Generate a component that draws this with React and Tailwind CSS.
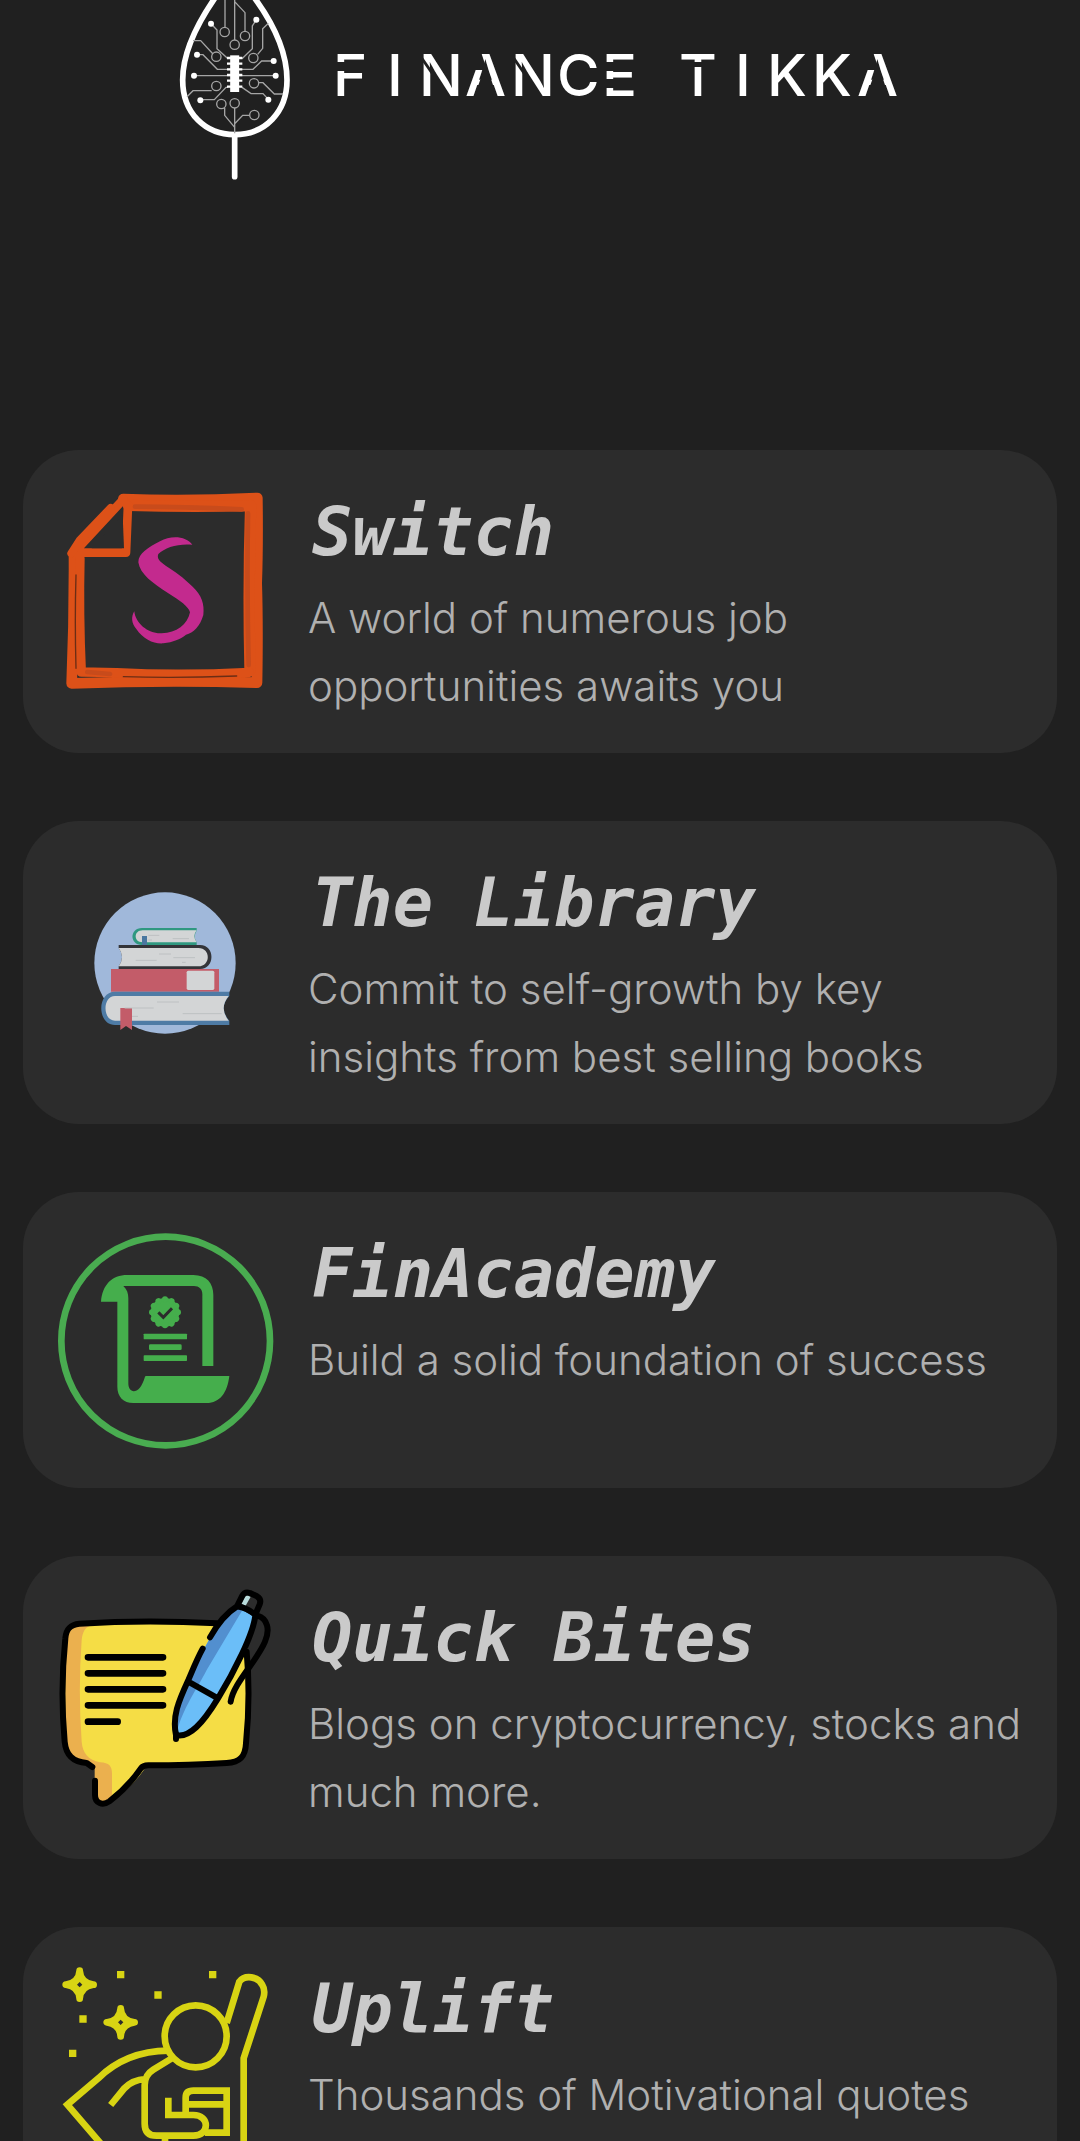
const cards = [
  { title: "Switch", text: "A world of numerous job opportunities awaits you", Icon: SwitchIcon },
  { title: "The Library", text: "Commit to self-growth by key insights from best selling books", Icon: LibraryIcon },
  { title: "FinAcademy", text: "Build a solid foundation of success", Icon: AcademyIcon },
  { title: "Quick Bites", text: "Blogs on cryptocurrency, stocks and much more.", Icon: BitesIcon },
  { title: "Uplift", text: "Thousands of Motivational quotes", Icon: UpliftIcon },
];

const iconClass = "block w-full h-auto overflow-visible";

function LeafLogo() {
  return (
    <svg viewBox="50 0 348 540" className="block h-[180px] w-[116px] shrink-0 overflow-visible" fill="none" stroke="#fff" aria-hidden="true">
      <path d="M170 -15C110 70 67 155 67 240C67 340 135 404 223 404C315 404 380 335 380 240C380 155 340 70 276 -15" strokeWidth="17" />
      <path d="M223 408V530" strokeWidth="17" strokeLinecap="round" />
      <g stroke="#a5a5a5" strokeWidth="4">
        <path d="M194 -5V82M223 -5V120M223 5L254 38V94" />
        <circle cx="193" cy="96" r="14" /><circle cx="223" cy="134" r="14" /><circle cx="254" cy="108" r="14" />
        <path d="M152 71L170 90V146L203 176M288 59L276 78V146L245 176M324 70L307 86V145L292 163M98 122H121L158 162" />
        <circle cx="168" cy="170" r="14" /><circle cx="279" cy="174" r="14" />
        <path d="M110 164H128L171 208H278L304 183H340M101 227H346M203 262H197L162 299H120M245 262L272 281H308L324 298" />
        <circle cx="168" cy="258" r="14" /><circle cx="281" cy="250" r="14" />
        <path d="M154 272H98L80 290M295 248H308L342 282H368" />
        <circle cx="183" cy="312" r="14" /><circle cx="223" cy="310" r="14" /><circle cx="282" cy="345" r="14" />
        <path d="M223 324V400M193 324V346L223 382M223 371L247 346H268" />
      </g>
      <g fill="#fff" stroke="none">
        <circle cx="152" cy="71" r="9" /><circle cx="288" cy="59" r="9" /><circle cx="110" cy="164" r="9" />
        <circle cx="340" cy="183" r="9" /><circle cx="101" cy="227" r="9" /><circle cx="346" cy="227" r="9" />
        <circle cx="120" cy="301" r="9" /><circle cx="324" cy="299" r="9" />
      </g>
      <path d="M223 166V276" strokeWidth="27" />
      <path d="M200 174H246M200 191H246M200 208H246M200 225H246M200 242H246M200 260H246" strokeWidth="7" />
    </svg>
  );
}

function SwitchIcon() {
  return (
    <svg viewBox="-6 33 648 648" className={iconClass} fill="none" aria-hidden="true">
      <g stroke="#dd5118" strokeLinejoin="round" strokeLinecap="round">
        <path d="M190 57Q380 64 592 54Q594 200 590 310Q594 430 591 608Q320 600 35 610Q43 420 42 222" strokeWidth="32" />
        <path d="M205 76Q390 82 572 77Q564 320 570 570" strokeWidth="34" />
        <path d="M568 577Q360 588 170 578L64 576Q56 400 60 235" strokeWidth="28" />
        <path d="M190 58L42 218H198L204 75" strokeWidth="26" />
        <path d="M152 84L60 180L34 220" strokeWidth="24" />
      </g>
      <g stroke="#c84b1b" strokeWidth="14" strokeLinecap="round">
        <path d="M225 80Q370 80 545 88M564 100Q560 330 566 555M82 576L150 582" />
      </g>
      <path d="M48 285Q44 420 48 565M190 590Q350 595 530 588" stroke="#6b2d15" strokeWidth="4" strokeLinecap="round" />
      <path d="M95 205L188 105L192 205Z" fill="#2c2c2c" />
      <path d="M397 194C380 170 335 164 300 184C265 202 235 220 235 247C240 283 278 309 325 340C360 362 386 380 390 397C382 435 350 458 305 460C265 462 226 430 223 394C213 410 214 430 229 447C250 478 280 492 310 490C340 486 360 478 378 464C400 458 420 440 430 405C434 372 425 345 398 320C370 292 345 275 317 257C298 244 290 235 295 222C315 202 355 190 397 194Z" fill="#c32a8e" />
    </svg>
  );
}

function LibraryIcon() {
  return (
    <svg viewBox="-66 -54 648 648" className={iconClass} fill="none" aria-hidden="true">
      <circle cx="255" cy="249" r="212" fill="#a0b8da" />
      <path d="M350 144H186C148 144 148 195 186 195H350V187Q338 168 350 152Z" fill="#2f9880" />
      <path d="M350 151H188C160 151 160 187 188 187H350Q336 168 350 151Z" fill="#d3d5d6" />
      <path d="M186 168H201V195H186Z" fill="#4a77a0" />
      <path d="M116 195H360C406 195 406 267 360 267H116V259Q136 230 116 204Z" fill="#333438" />
      <path d="M116 204H355C393 204 393 259 355 259H116Q136 230 116 204Z" fill="#d3d5d6" />
      <path d="M93 267H417V335H93Z" fill="#c35c69" />
      <rect x="320" y="272" width="83" height="58" rx="5" fill="#d3d5d6" />
      <path d="M448 335H105C50 335 50 435 105 435H448V422Q414 385 448 348Z" fill="#4e7ba5" />
      <path d="M446 348H105C67 348 67 422 105 422H446Q416 385 446 348Z" fill="#d3d5d6" />
      <path d="M121 384H156V450L138 438L121 450Z" fill="#c35c69" />
      <path d="M205 166H238M278 176H327M205 180H216M237 222H273M280 233H345M167 241H230M306 247H317M231 366H297M134 384H221M156 409H174M308 401H425" stroke="#bdc0c2" strokeWidth="3" />
    </svg>
  );
}

function AcademyIcon() {
  const petals = Array.from({ length: 12 }, (_, i) => i * 30);
  return (
    <svg viewBox="24 39 648 648" className={iconClass} fill="none" aria-hidden="true">
      <circle cx="347" cy="363" r="313" stroke="#49ac50" strokeWidth="20" />
      <g fill="#45ae4c">
        <path d="M153 245C157 195 185 165 232 165H430C470 165 490 190 490 225V438H457V222C457 207 447 198 432 198H220C231 208 235 220 235 235V490C235 522 269 527 285 470L287 468H538C532 518 510 549 470 549H250C220 549 202 530 202 500V245Z" />
        <circle cx="345" cy="277" r="43" />
        {petals.map((a) => (
          <circle key={a} cx="345" cy="238" r="9" transform={`rotate(${a} 345 277)`} />
        ))}
        <rect x="281" y="341" width="130" height="17" rx="2" />
        <rect x="297" y="373" width="98" height="17" rx="4" />
        <rect x="281" y="406" width="130" height="17" rx="2" />
      </g>
      <path d="M325 277L340 292L366 265" stroke="#2c2c2c" strokeWidth="9" />
    </svg>
  );
}

function BitesIcon() {
  return (
    <svg viewBox="24 51 648 648" className={iconClass} fill="none" strokeLinecap="round" strokeLinejoin="round" aria-hidden="true">
      <path d="M88 131Q330 120 540 135C580 138 590 160 592 200Q602 340 588 480C585 530 570 546 530 549Q420 556 290 557C270 590 225 640 178 668C155 678 136 665 136 645V560L110 550C60 545 47 520 44 485Q30 330 46 175C50 145 60 133 88 131Z" fill="#f5dd45" />
      <path d="M120 138H88C62 140 54 155 52 180Q40 330 51 485C55 520 65 540 112 543L134 560V640C134 660 150 668 163 668L186 645V580C186 560 178 548 150 547C115 540 98 520 95 485Q84 330 95 180C98 155 106 142 120 138Z" fill="#ebb04e" />
      <path d="M500 130Q290 118 88 131C58 134 48 150 46 175Q30 330 44 485C48 525 68 546 110 549L127 561M135 602V645C135 670 158 678 178 664C220 632 245 605 272 566C278 557 285 556 295 556Q420 556 530 549C570 546 586 530 588 490Q602 350 590 215" stroke="#000" strokeWidth="18" />
      <path d="M114 232H339M114 280H339M114 328H339M114 376H339M114 425H203" stroke="#000" strokeWidth="20" />
      <path d="M560 80C500 130 470 185 425 285C390 360 370 410 378 463C420 470 460 430 500 355C560 260 612 180 612 110Z" fill="#6bbef8" />
      <path d="M560 80C500 130 470 185 425 285C390 360 370 410 378 463C400 380 440 330 470 270L576 92Z" fill="#528fcf" />
      <path d="M561 78L576 47Q584 34 600 40L622 50Q634 58 629 73L616 104Z" fill="#2c2c2c" />
      <path d="M588 45L602 50L587 77L573 71Z" fill="#b9dcdc" />
      <path d="M480 172C500 136 530 98 561 79L577 47Q584 34 600 39L621 49Q635 57 629 73L616 104C612 160 550 280 504 355C458 430 418 475 378 465C366 410 385 365 415 300C430 265 442 235 458 206M561 79Q590 83 616 104M420 308L504 355M378 460V477M622 107C654 116 660 150 645 185C620 245 550 310 542 365" stroke="#000" strokeWidth="18" />
    </svg>
  );
}

function UpliftIcon() {
  return (
    <svg viewBox="24 51 648 648" className={iconClass} fill="none" stroke="#d8d413" strokeWidth="20" aria-hidden="true">
      <circle cx="437" cy="256" r="93" />
      <path d="M530 216L568 92C585 70 625 76 637 102Q646 116 641 137L581 322V700" />
      <path d="M355 299C270 300 200 328 145 382L52 461L150 575L260 700" />
      <path d="M182 462L223 412Q248 386 286 384M372 318L310 356Q284 372 284 402V518Q284 554 320 554H430C480 554 480 492 430 492H355V440" />
      <path d="M407 492V440Q407 419 430 419H530V545H465M412 460H530M345 560V700" />
      <g fill="#d8d413" stroke="none">
        <path d="M201 60h22v22h-22zM477 60h22v22h-22zM313 121h22v22h-22zM88 193h22v22h-22zM57 296h22v22h-22z" />
        <path id="spark" d="M79 58Q79 49 89 49Q99 49 99 58Q101 87 131 91Q141 92 141 101Q141 111 131 111Q101 115 99 144Q99 153 89 153Q79 153 79 144Q77 115 47 111Q37 110 37 101Q37 92 47 91Q77 87 79 58Z" />
        <use href="#spark" x="123" y="113" />
      </g>
      <path d="M89 93l8 8l-8 8l-8-8zM212 206l8 8l-8 8l-8-8z" fill="#2c2c2c" stroke="none" />
    </svg>
  );
}

const cellWidths = {
  F: "w-[54px]",
  I: "w-[32px]",
  N: "w-[46px]",
  A: "w-[46px]",
  C: "w-[45px]",
  E: "w-[45px]",
  T: "w-[56px]",
  K: "w-[45px]",
};

// Background-coloured slits that give the wordmark its stencil look.
const slits = {
  F: "M0 19H13V28H0Z",
  E: "M0 19H13V28H0ZM0 36H13V45H0Z",
  T: "M8 19H32V24H8Z",
  N: "M3 13L14 29V34L3 18Z",
  A: "M21 21L32 54H9ZM9 9H16L22 27H9Z",
};

function Wordmark() {
  return (
    <h1 className="flex gap-8 font-['Inter',sans-serif] text-[58px] leading-[64px] font-medium text-white" aria-label="Finance Tikka">
      {["FINANCE", "TIKKA"].map((word) => (
        <span key={word} className="flex">
          {word.split("").map((letter, i) => (
            <span key={i} className={`relative block ${cellWidths[letter]}`}>
              {letter}
              {slits[letter] && (
                <svg viewBox="0 0 46 64" className="absolute top-0 left-0 h-16 w-[46px]" fill="#202020" aria-hidden="true">
                  <path d={slits[letter]} />
                </svg>
              )}
            </span>
          ))}
        </span>
      ))}
    </h1>
  );
}

export default function App() {
  return (
    <main className="h-screen overflow-hidden bg-[#202020]">
      <header className="flex items-start justify-center gap-10 pb-[270px]">
        <LeafLogo />
        <div className="pt-[43px]">
          <Wordmark />
        </div>
      </header>
      <div className="flex flex-col gap-[68px] px-[23px]">
        {cards.map(({ title, text, Icon }) => (
          <a key={title} href={`#${title}`} className="flex items-start gap-[34px] rounded-[56px] bg-[#2c2c2c] pt-[41px] pr-5 pb-[33px] pl-[35px]">
            <div className="mb-[6px] w-[216px] shrink-0">
              <Icon />
            </div>
            <div className="min-w-0 flex-1">
              <h2 className="mb-[10px] pl-1 font-['DejaVu_Sans_Mono',monospace] text-[67px] leading-[83px] font-bold text-[#cacaca] italic">{title}</h2>
              <p className="font-['Inter',sans-serif] text-[42px] leading-[68px] font-light text-[#b0b0b0]">{text}</p>
            </div>
          </a>
        ))}
      </div>
    </main>
  );
}
